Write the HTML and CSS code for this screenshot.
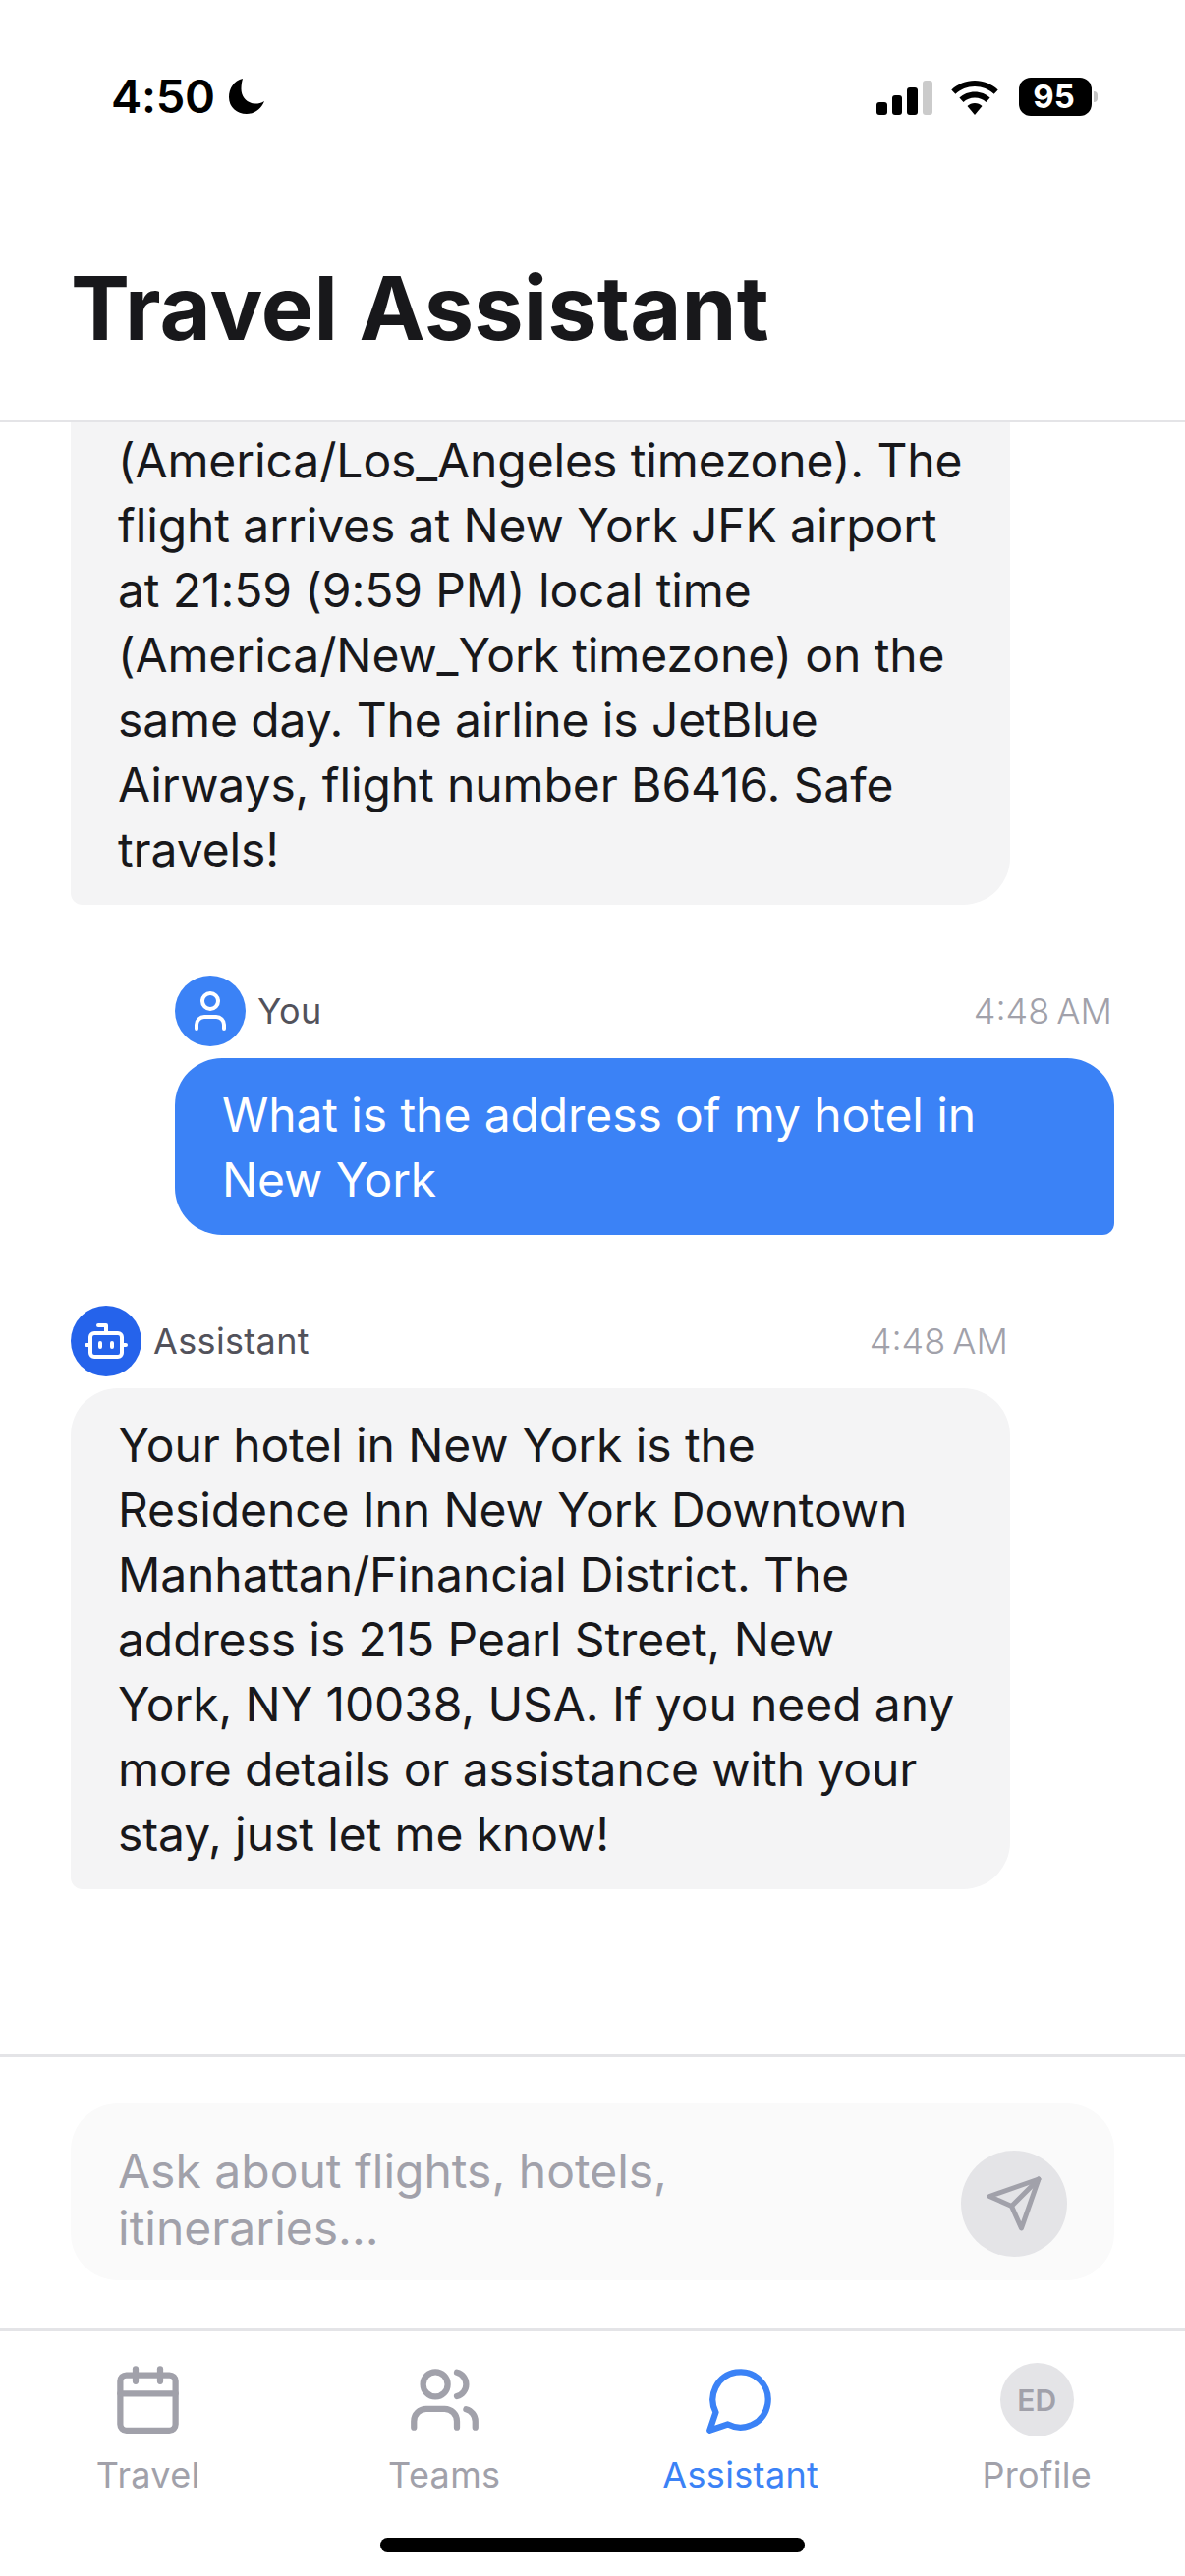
FILE: index.html
```html
<!DOCTYPE html>
<html lang="en">
<head>
<meta charset="utf-8">
<title>Travel Assistant</title>
<link rel="stylesheet" href="styles.css">
</head>
<body>
<div class="app">
  <div class="status">
    <div class="status-left">
      <span class="clock">4:50</span>
      <svg class="moon" viewBox="0 0 36 36"><path d="M14 0C5 2 0 10 0 19 0 29 8 36 18 36 26 36 33 31 36 23 33 25 30 25.500 27 25.500 19 25.500 12.500 19 12.500 10.500 12.500 7 13 3 14 0Z"/></svg>
    </div>
    <div class="status-right">
      <div class="signal">
        <span class="bar bar-1"></span><span class="bar bar-2"></span><span class="bar bar-3"></span><span class="bar bar-4"></span>
      </div>
      <svg class="wifi" viewBox="0 0 48 35"><path d="M24 0C14.800 0 6.500 3.600 0.300 9.400L4.400 13.700C9.500 8.900 16.400 6 24 6S38.500 8.900 43.600 13.700L47.700 9.400C41.500 3.600 33.200 0 24 0Z"/><path d="M24 11.500C18 11.500 12.500 13.800 8.400 17.600L12.500 21.900C15.500 19.100 19.500 17.400 24 17.400S32.500 19.100 35.500 21.900L39.600 17.600C35.500 13.800 30 11.500 24 11.500Z"/><path d="M24 23C21 23 18.500 24.100 16.500 25.900L24 35 31.500 25.900C29.500 24.100 27 23 24 23Z"/></svg>
      <div class="battery"><span class="battery-body">95</span><span class="battery-nub"></span></div>
    </div>
  </div>

  <header class="page-header">
    <h1 class="page-title">Travel Assistant</h1>
  </header>

  <main class="chat">
    <div class="message message-assistant">
      <div class="bubble bubble-assistant bubble-cut">(America/Los_Angeles timezone). The<br>flight arrives at New York JFK airport at 21:59 (9:59 PM) local time (America/New_York timezone) on the same day. The airline is JetBlue Airways, flight number B6416. Safe travels!</div>
    </div>

    <div class="message message-user">
      <div class="meta">
        <div class="who">
          <span class="avatar avatar-user">
            <svg class="avatar-icon" viewBox="0 0 24 24"><path d="M19 21v-2a4 4 0 0 0-4-4H9a4 4 0 0 0-4 4v2"/><circle cx="12" cy="7" r="4"/></svg>
          </span>
          <span class="name">You</span>
        </div>
        <span class="time">4:48 AM</span>
      </div>
      <div class="bubble bubble-user">What is the address of my hotel in New York</div>
    </div>

    <div class="message message-assistant">
      <div class="meta">
        <div class="who">
          <span class="avatar avatar-bot">
            <svg class="avatar-icon" viewBox="0 0 24 24"><path d="M12 8V4H8"/><rect x="4" y="8" width="16" height="12" rx="2"/><path d="M2 14h2"/><path d="M20 14h2"/><path d="M15 13v2"/><path d="M9 13v2"/></svg>
          </span>
          <span class="name">Assistant</span>
        </div>
        <span class="time">4:48 AM</span>
      </div>
      <div class="bubble bubble-assistant">Your hotel in New York is the Residence Inn New York Downtown Manhattan/Financial District. The address is 215 Pearl Street, New<br>York, NY 10038, USA. If you need any more details or assistance with your stay, just let me know!</div>
    </div>
  </main>

  <section class="composer">
    <div class="input">
      <div class="placeholder">Ask about flights, hotels, itineraries...</div>
      <button class="send" type="button" aria-label="Send">
        <svg class="send-icon" viewBox="0 0 24 24"><path d="m22 2-7 20-4-9-9-4Z"/><path d="M22 2 11 13"/></svg>
      </button>
    </div>
  </section>

  <nav class="tabs">
    <div class="tab">
      <svg class="tab-icon" viewBox="0 0 24 24"><path d="M8 2v4"/><path d="M16 2v4"/><rect x="3" y="4" width="18" height="18" rx="2"/><path d="M3 10h18"/></svg>
      <span class="tab-label">Travel</span>
    </div>
    <div class="tab">
      <svg class="tab-icon" viewBox="0 0 24 24"><path d="M16 21v-2a4 4 0 0 0-4-4H6a4 4 0 0 0-4 4v2"/><circle cx="9" cy="7" r="4"/><path d="M22 21v-2a4 4 0 0 0-3-3.870"/><path d="M16 3.130a4 4 0 0 1 0 7.750"/></svg>
      <span class="tab-label">Teams</span>
    </div>
    <div class="tab tab-active">
      <svg class="tab-icon" viewBox="0 0 24 24"><path d="M7.900 20A9 9 0 1 0 4 16.100L2 22Z"/></svg>
      <span class="tab-label">Assistant</span>
    </div>
    <div class="tab">
      <span class="tab-avatar">ED</span>
      <span class="tab-label">Profile</span>
    </div>
  </nav>

  <div class="home-indicator"></div>
</div>
</body>
</html>
```

FILE: styles.css
```css
* { box-sizing: border-box; }
html, body { margin: 0; padding: 0; background: #fff; }
body { font-family: "Inter", "Liberation Sans", sans-serif; color: #18181b; }

.app {
  position: relative;
  width: 1206px;
  height: 2622px;
  display: flex;
  flex-direction: column;
  overflow: hidden;
  background: #fff;
}

/* status bar */
.status {
  height: 198px;
  flex: none;
  display: flex;
  justify-content: space-between;
  align-items: flex-start;
  padding: 78px 89px 0 113px;
}
.status-left { display: flex; align-items: center; height: 40px; gap: 14px; }
.clock { font-size: 47px; font-weight: 600; color: #000; line-height: 40px; letter-spacing: -0.3px; }
.moon { width: 36px; height: 36px; fill: #000; }
.status-right { display: flex; align-items: center; height: 40px; }
.signal { display: flex; align-items: flex-end; gap: 5px; height: 35px; margin-top: 2px; }
.bar { width: 10.500px; background: #000; border-radius: 3px; }
.bar-1 { height: 13px; }
.bar-2 { height: 20px; }
.bar-3 { height: 28px; }
.bar-4 { height: 35px; background: #cbcbcb; }
.wifi { width: 48px; height: 35px; margin: 2px 0 0 19px; fill: #000; }
.battery { display: flex; align-items: center; margin-left: 21px; }
.battery-body {
  width: 74px;
  height: 39px;
  border-radius: 12px;
  background: #000;
  color: #fff;
  font-size: 33px;
  font-weight: 700;
  line-height: 39px;
  text-align: center;
  padding-right: 3px;
}
.battery-nub {
  width: 4px;
  height: 11px;
  margin-left: 2px;
  background: #c4c4c4;
  border-radius: 0 6px 6px 0;
}

/* header */
.page-header {
  height: 232px;
  flex: none;
  padding: 58px 72px 0;
  border-bottom: 3px solid #e4e4e7;
}
.page-title {
  margin: 0;
  font-size: 90px;
  font-weight: 700;
  line-height: 116px;
  letter-spacing: 0.1px;
  color: #18181b;
}

/* chat */
.chat {
  flex: 1;
  min-height: 0;
  overflow: hidden;
  display: flex;
  flex-direction: column;
  justify-content: flex-end;
  gap: 72px;
  padding: 0 72px 168px;
}
.message { width: 956px; flex: none; }
.message-user { align-self: flex-end; }
.message-assistant { align-self: flex-start; }
.meta {
  display: flex;
  justify-content: space-between;
  align-items: center;
  height: 72px;
  margin-bottom: 12px;
}
.who { display: flex; align-items: center; gap: 12px; }
.avatar {
  width: 72px;
  height: 72px;
  border-radius: 50%;
  display: flex;
  align-items: center;
  justify-content: center;
}
.avatar-user { background: #3b82f6; }
.avatar-bot { background: #2563eb; }
.avatar-icon {
  width: 48px;
  height: 48px;
  fill: none;
  stroke: #fff;
  stroke-width: 2;
  stroke-linecap: round;
  stroke-linejoin: round;
}
.name { font-size: 36px; font-weight: 400; letter-spacing: 0.35px; color: #52525b; }
.time { font-size: 36px; font-weight: 350; word-spacing: -3px; color: #a1a1aa; padding-right: 2px; }
.bubble {
  padding: 25px 40px 23px 48px;
  font-size: 48px;
  font-weight: 390;
  letter-spacing: -0.1px;
  line-height: 66px;
  border-radius: 48px;
}
.bubble-assistant {
  background: #f4f4f5;
  color: #18181b;
  border-bottom-left-radius: 12px;
}
.bubble-cut { padding-top: 72px; }
.bubble-user {
  background: #3b82f6;
  color: #fff;
  border-bottom-right-radius: 12px;
}

/* composer */
.composer {
  flex: none;
  height: 279px;
  padding: 47px 72px 0;
  border-top: 3px solid #e4e4e7;
}
.input {
  height: 180px;
  border-radius: 48px;
  background: #fafafa;
  display: flex;
  align-items: flex-end;
  justify-content: space-between;
  padding: 0 48px 24px;
}
.placeholder {
  width: 630px;
  font-size: 48px;
  font-weight: 390;
  line-height: 58px;
  color: #a1a1aa;
}
.send {
  flex: none;
  width: 108px;
  height: 108px;
  border: 0;
  padding: 0;
  border-radius: 50%;
  background: #e4e4e7;
  display: flex;
  align-items: center;
  justify-content: center;
}
.send-icon {
  width: 60px;
  height: 60px;
  fill: none;
  stroke: #a1a1aa;
  stroke-width: 2;
  stroke-linecap: round;
  stroke-linejoin: round;
}

/* tabs */
.tabs {
  flex: none;
  height: 252px;
  border-top: 3px solid #e4e4e7;
  display: grid;
  grid-template-columns: repeat(4, 1fr);
  padding-top: 32px;
}
.tab {
  display: flex;
  flex-direction: column;
  align-items: center;
  color: #a1a1aa;
}
.tab-icon {
  width: 75px;
  height: 75px;
  fill: none;
  stroke: #a1a1aa;
  stroke-width: 2;
  stroke-linecap: round;
  stroke-linejoin: round;
}
.tab-label {
  margin-top: 17px;
  font-size: 36px;
  line-height: 44px;
  font-weight: 400;
  letter-spacing: 0.35px;
}
.tab-active { color: #3b82f6; }
.tab-active .tab-icon { stroke: #3b82f6; }
.tab-avatar {
  width: 75px;
  height: 75px;
  border-radius: 50%;
  background: #e4e4e7;
  color: #a1a1aa;
  font-size: 30px;
  font-weight: 600;
  display: flex;
  align-items: center;
  justify-content: center;
}

.home-indicator {
  position: absolute;
  left: 387px;
  bottom: 24px;
  width: 432px;
  height: 15px;
  border-radius: 8px;
  background: #000;
}
```
